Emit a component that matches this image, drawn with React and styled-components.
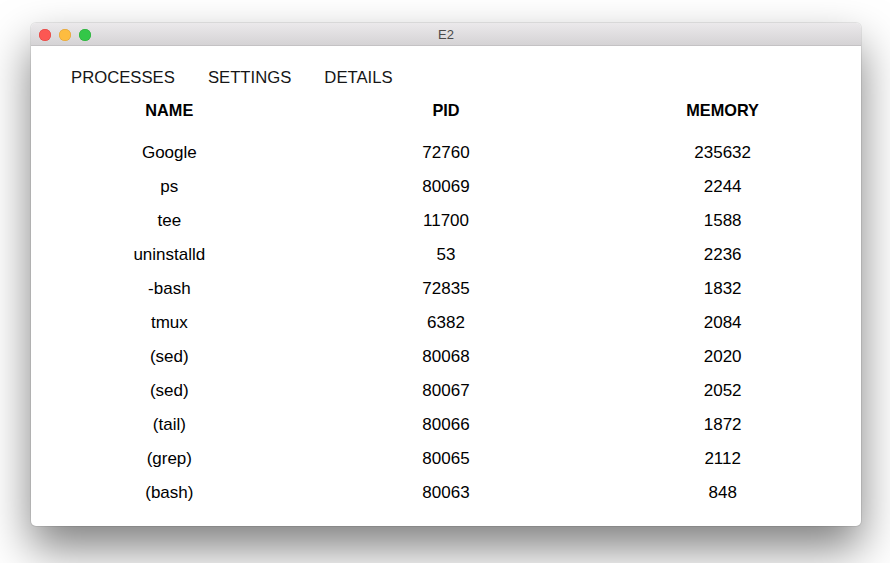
import React from "react";
import styled, { createGlobalStyle } from "styled-components";

const Global = createGlobalStyle`
  html, body { margin: 0; padding: 0; background: #ffffff; }
  body { font-family: "Liberation Sans", Arial, sans-serif; }
`;

const Desktop = styled.div`
  width: 890px;
  height: 563px;
  box-sizing: border-box;
  padding: 23px 29px 37px 31px;
  background: #ffffff;
  overflow: hidden;
`;

const Window = styled.div`
  width: 830px;
  height: 503px;
  display: flex;
  flex-direction: column;
  border-radius: 5px;
  background: #ffffff;
  box-shadow: 0 22px 45px rgba(0, 0, 0, 0.5), 0 0 0 1px rgba(0, 0, 0, 0.08);
  overflow: hidden;
`;

const TitleBar = styled.div`
  position: relative;
  height: 23px;
  flex: 0 0 23px;
  display: flex;
  align-items: center;
  justify-content: center;
  background: linear-gradient(#ebe9eb, #d5d3d5);
  border-bottom: 1px solid #c4c2c4;
  box-sizing: border-box;
`;

const Lights = styled.div`
  position: absolute;
  left: 8px;
  top: 6px;
  display: flex;
  gap: 8px;
`;

const Light = styled.span`
  width: 12px;
  height: 12px;
  border-radius: 50%;
  background: ${(p) => p.$c};
  box-shadow: inset 0 0 0 0.5px ${(p) => p.$b};
`;

const Title = styled.span`
  font-size: 13px;
  color: #4a4a4a;
  padding-top: 1px;
`;

const Content = styled.div`
  flex: 1;
  display: flex;
  flex-direction: column;
  padding-top: 16px;
`;

const Tabs = styled.div`
  display: flex;
  gap: 33px;
  padding-left: 40px;
  height: 31px;
  align-items: center;
`;

const Tab = styled.span`
  font-size: 16.7px;
  color: #161616;
`;

const HeadRow = styled.div`
  display: grid;
  grid-template-columns: repeat(3, 1fr);
  margin-bottom: 9px;
`;

const HeadCell = styled.div`
  display: flex;
  align-items: center;
  justify-content: center;
  font-size: 16.3px;
  font-weight: bold;
  color: #000;
  height: 34px;
`;

const Grid = styled.div`
  display: grid;
  grid-template-columns: repeat(3, 1fr);
  grid-auto-rows: 34px;
`;

const Cell = styled.div`
  display: flex;
  align-items: center;
  justify-content: center;
  font-size: 17px;
  color: #000;
`;

const rows = [
  ["Google", "72760", "235632"],
  ["ps", "80069", "2244"],
  ["tee", "11700", "1588"],
  ["uninstalld", "53", "2236"],
  ["-bash", "72835", "1832"],
  ["tmux", "6382", "2084"],
  ["(sed)", "80068", "2020"],
  ["(sed)", "80067", "2052"],
  ["(tail)", "80066", "1872"],
  ["(grep)", "80065", "2112"],
  ["(bash)", "80063", "848"],
];

export default function App() {
  return (
    <>
      <Global />
      <Desktop>
        <Window>
          <TitleBar>
            <Lights>
              <Light $c="#fc5753" $b="#de3f3b" />
              <Light $c="#fdbc40" $b="#de9f34" />
              <Light $c="#33c748" $b="#27aa35" />
            </Lights>
            <Title>E2</Title>
          </TitleBar>
          <Content>
            <Tabs>
              <Tab>PROCESSES</Tab>
              <Tab>SETTINGS</Tab>
              <Tab>DETAILS</Tab>
            </Tabs>
            <HeadRow>
              <HeadCell>NAME</HeadCell>
              <HeadCell>PID</HeadCell>
              <HeadCell>MEMORY</HeadCell>
            </HeadRow>
            <Grid>
              {rows.map((r, i) =>
                r.map((v, j) => <Cell key={i + "-" + j}>{v}</Cell>)
              )}
            </Grid>
          </Content>
        </Window>
      </Desktop>
    </>
  );
}
